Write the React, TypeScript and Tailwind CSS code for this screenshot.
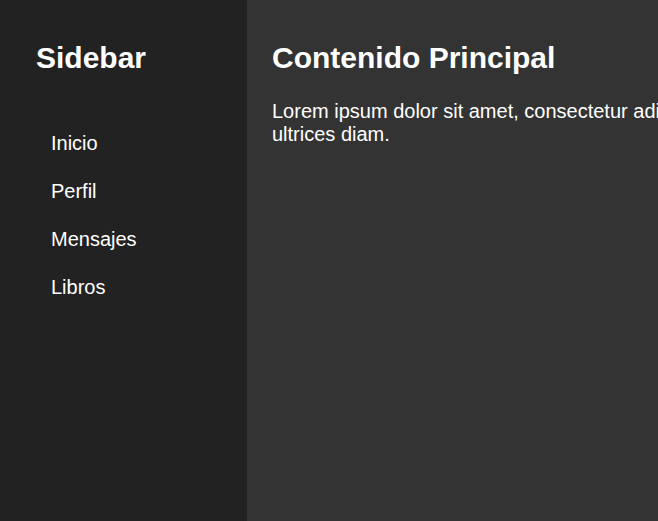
export default function App() {
    const links = ["Inicio", "Perfil", "Mensajes", "Libros"]

    return (
        <div className="flex h-screen w-screen overflow-hidden bg-[#333333] font-['Liberation_Sans',Arial,sans-serif] text-white">
            <aside className="w-[247px] shrink-0 bg-[#222222] px-9 pt-10">
                <h2 className="text-3xl leading-9 font-bold">Sidebar</h2>
                <ul className="mt-[43px] pl-[15px]">
                    {links.map((link) => (
                        <li key={link}>
                            <a href="#" className="block py-3 text-xl leading-6">
                                {link}
                            </a>
                        </li>
                    ))}
                </ul>
            </aside>

            <main className="shrink-0 px-[25px] pt-10">
                <h1 className="text-3xl leading-9 font-bold">Contenido Principal</h1>
                <p className="mt-6 text-xl leading-[23px] whitespace-nowrap">
                    Lorem ipsum dolor sit amet, consectetur adipiscing elit. Sed non risus. Suspendisse lectus tortor, dignissim sit amet, adipiscing nec,
                    <br />
                    ultrices diam.
                </p>
            </main>
        </div>
    )
}
